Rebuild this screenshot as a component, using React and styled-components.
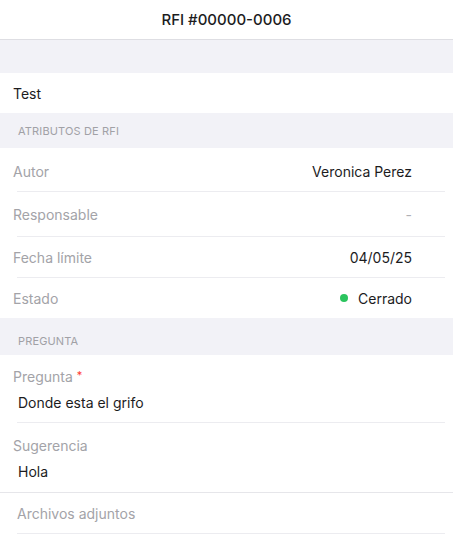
import React from "react";
import styled, { createGlobalStyle } from "styled-components";

const Global = createGlobalStyle`
  html, body { margin: 0; padding: 0; background: #ffffff; }
  body { font-family: Inter, "Noto Sans", "Liberation Sans", sans-serif; -webkit-font-smoothing: antialiased; }
`;

const Page = styled.div`
  width: 453px;
  background: #ffffff;
`;

const Header = styled.div`
  height: 39px;
  display: flex;
  align-items: center;
  justify-content: center;
  border-bottom: 1px solid #dedee3;
  font-size: 15px;
  font-weight: 500;
  color: #1c1c1e;
`;

const Spacer = styled.div`
  height: 33px;
  background: #f2f2f7;
`;

const SectionHeader = styled.div`
  height: ${(p) => p.$h}px;
  background: #f2f2f7;
  display: flex;
  align-items: center;
  padding-left: 18px;
  padding-top: ${(p) => p.$pt || 0}px;
  box-sizing: border-box;
  font-size: 11px;
  color: #a1a1a6;
  text-transform: uppercase;
  letter-spacing: 0.15px;
`;

const Plain = styled.div`
  height: 40px;
  display: flex;
  align-items: center;
  padding-left: 13px;
  font-size: 14px;
  color: #1c1c1e;
  background: #fff;
`;

const Group = styled.div`
  background: #fff;
`;

const Row = styled.div`
  height: ${(p) => p.$h}px;
  display: flex;
  align-items: center;
  justify-content: space-between;
  padding: 0 41px 0 13px;
  padding-top: ${(p) => p.$pt || 0}px;
  box-sizing: border-box;
  font-size: 14px;
`;

const Divider = styled.div`
  height: 1px;
  margin: 0 8px 0 17px;
  background: #ececf0;
`;

const FullDivider = styled.div`
  height: 1px;
  background: #e6e6ea;
`;

const Label = styled.span`
  color: #a3a3a8;
`;

const Value = styled.span`
  color: ${(p) => (p.$muted ? "#b0b0b5" : "#1c1c1e")};
  display: flex;
  align-items: center;
  gap: 10px;
`;

const Dot = styled.span`
  width: 8px;
  height: 8px;
  border-radius: 50%;
  background: #2bc45e;
`;

const Field = styled.div`
  height: ${(p) => p.$h}px;
  padding: ${(p) => p.$pt}px 0 0 13px;
  box-sizing: border-box;
  display: flex;
  flex-direction: column;
  font-size: 14px;
`;

const FieldLabel = styled.div`
  color: #a3a3a8;
  height: 20px;
  line-height: 20px;
`;

const FieldValue = styled.div`
  color: #1c1c1e;
  height: 20px;
  line-height: 20px;
  margin-top: 6px;
  padding-left: 5px;
`;

const Required = styled.span`
  color: #ff3b30;
  font-size: 11px;
  margin-left: 4px;
  vertical-align: top;
  position: relative;
  top: -2px;
`;

const Attach = styled.div`
  height: 40px;
  display: flex;
  align-items: center;
  padding-left: 17px;
  font-size: 14px;
  color: #a3a3a8;
`;

const Tail = styled.div`
  height: 16px;
`;

export default function App() {
  return (
    <Page>
      <Global />
      <Header>RFI #00000-0006</Header>
      <Spacer />
      <Plain>Test</Plain>
      <SectionHeader $h={35}>Atributos de RFI</SectionHeader>
      <Group>
        <Row $h={43} $pt={3}>
          <Label>Autor</Label>
          <Value>Veronica Perez</Value>
        </Row>
        <Divider />
        <Row $h={44}>
          <Label>Responsable</Label>
          <Value $muted>-</Value>
        </Row>
        <Divider />
        <Row $h={40}>
          <Label>Fecha límite</Label>
          <Value>04/05/25</Value>
        </Row>
        <Divider />
        <Row $h={40}>
          <Label>Estado</Label>
          <Value>
            <Dot />
            Cerrado
          </Value>
        </Row>
      </Group>
      <SectionHeader $h={37} $pt={8}>Pregunta</SectionHeader>
      <Group>
        <Field $h={67} $pt={12}>
          <FieldLabel>
            Pregunta<Required>*</Required>
          </FieldLabel>
          <FieldValue>Donde esta el grifo</FieldValue>
        </Field>
        <Divider />
        <Field $h={69} $pt={13}>
          <FieldLabel>Sugerencia</FieldLabel>
          <FieldValue>Hola</FieldValue>
        </Field>
        <FullDivider />
        <Attach>Archivos adjuntos</Attach>
        <Divider />
        <Tail />
      </Group>
    </Page>
  );
}
